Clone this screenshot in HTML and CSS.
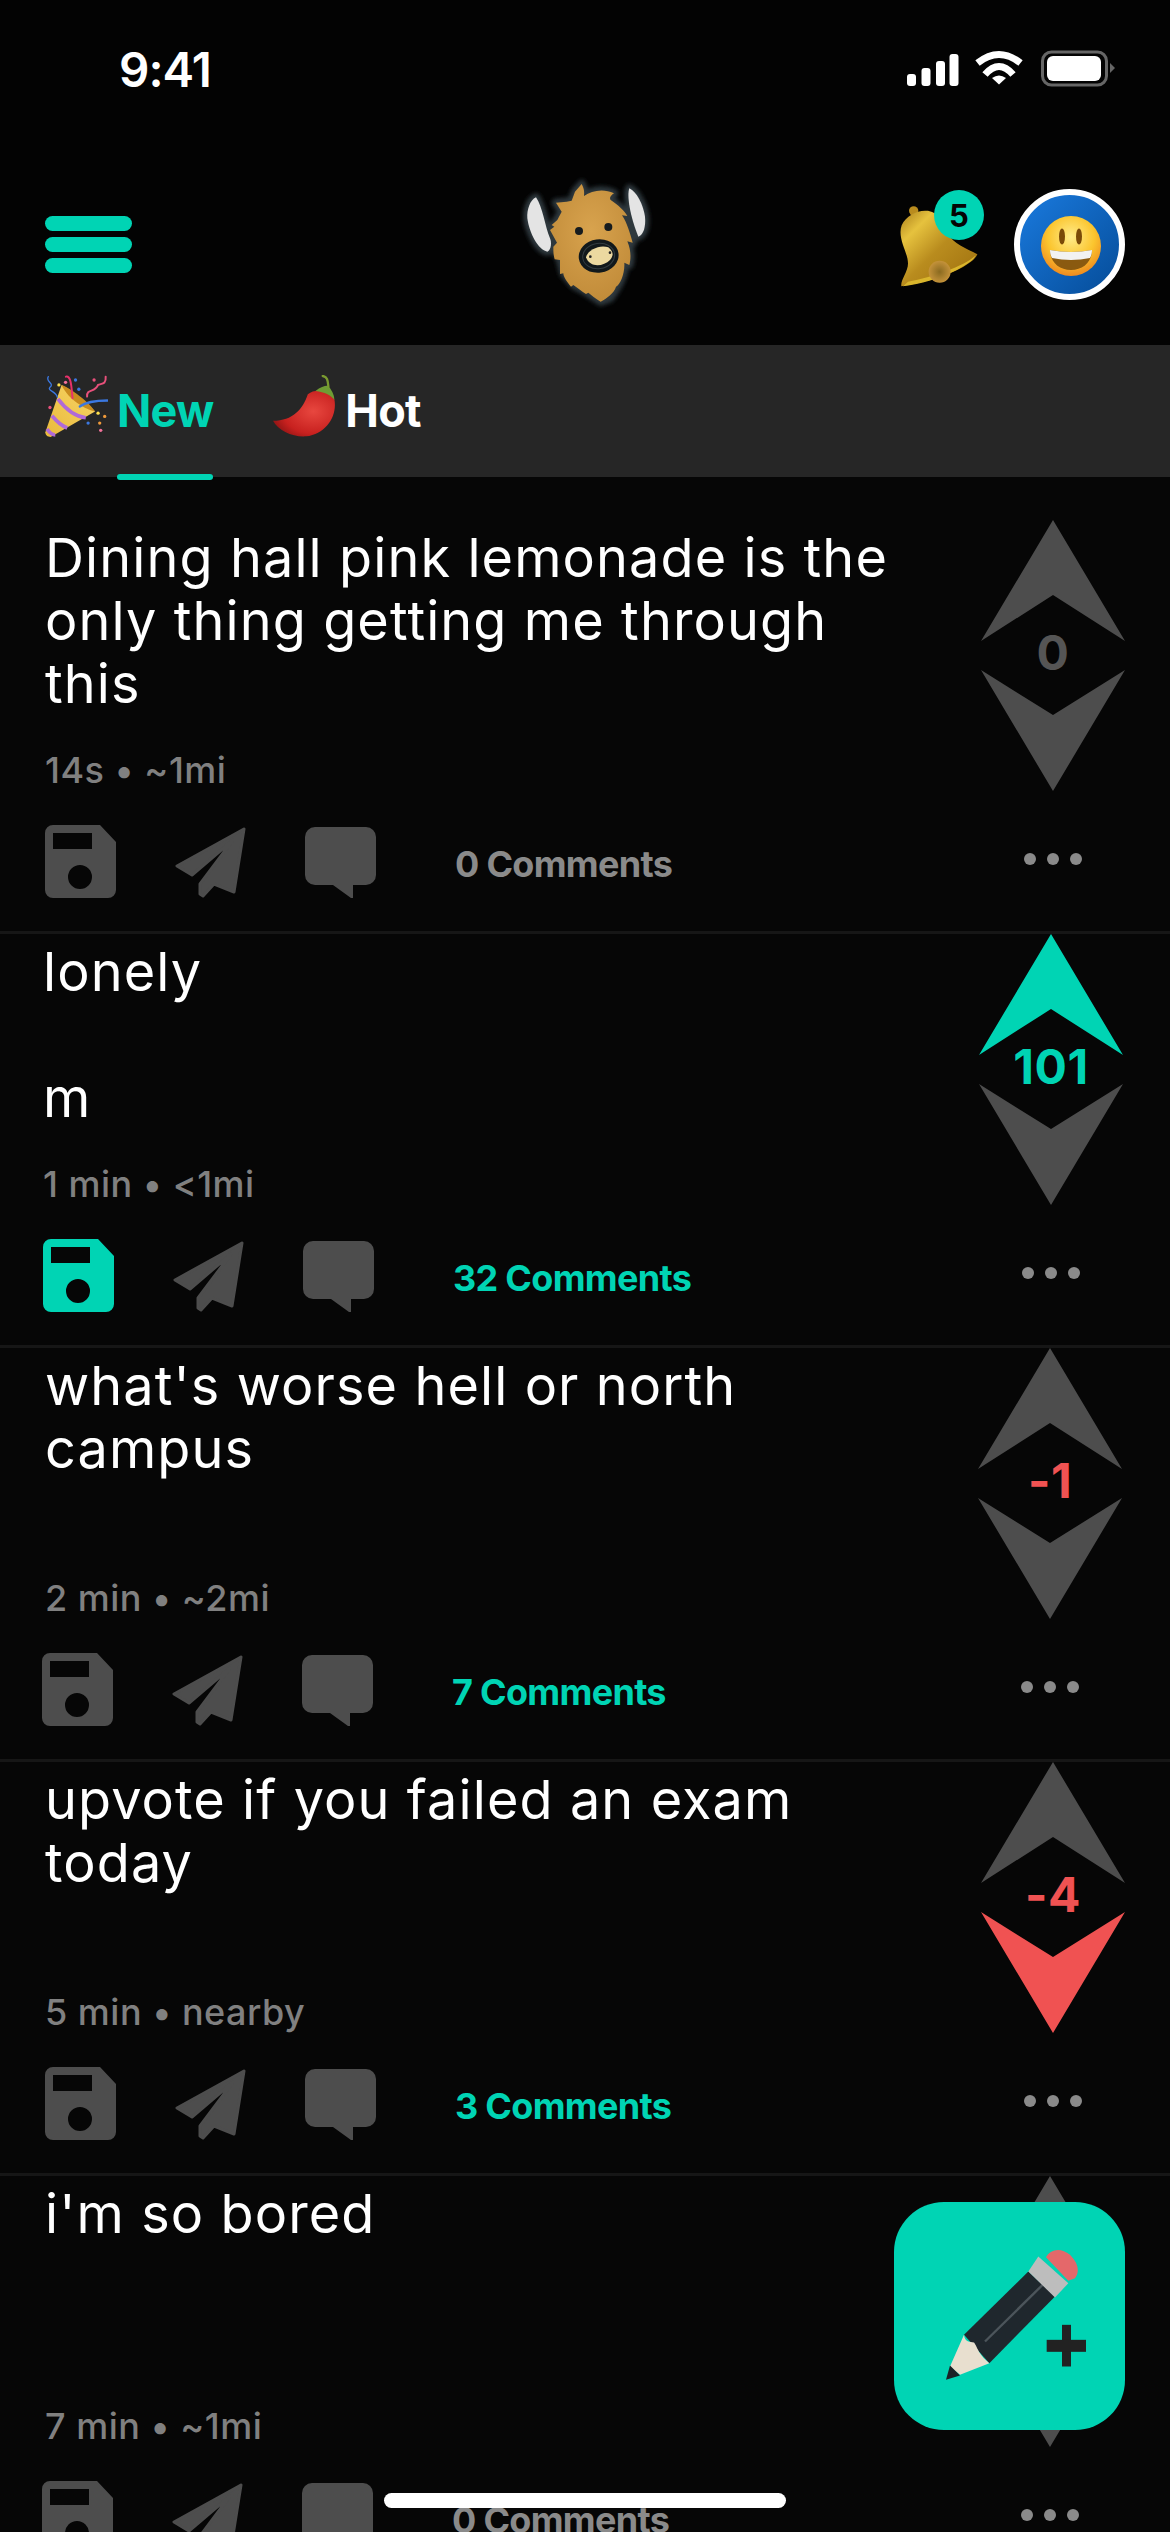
FILE: index.html
```html
<!DOCTYPE html>
<html lang="en">
<head>
<meta charset="utf-8">
<title>Yik Yak</title>
<link rel="stylesheet" href="styles.css">
</head>
<body>
<svg class="sprite" aria-hidden="true">
  <symbol id="i-save" viewBox="0 0 71 73"><path fill="currentColor" fill-rule="evenodd" d="M8 0H55L71 17V65a8 8 0 0 1-8 8H8a8 8 0 0 1-8-8V8a8 8 0 0 1 8-8ZM8 8V24H47V8ZM23 52a12 12 0 1 0 24 0a12 12 0 1 0-24 0Z"/></symbol>
  <symbol id="i-send" viewBox="0 0 71 71"><path fill="currentColor" stroke="currentColor" stroke-width="3" stroke-linejoin="round" d="M69 2L2 39L17 48L58 13L25 57V67L28 69L39 57L59 65Z"/></symbol>
  <symbol id="i-chat" viewBox="0 0 71 71"><path fill="currentColor" d="M10 0H61a10 10 0 0 1 10 10V48a10 10 0 0 1-10 10H48V71L46 71L28 58H10A10 10 0 0 1 0 48V10A10 10 0 0 1 10 0Z"/></symbol>
  <symbol id="i-up" viewBox="0 0 144 121"><path fill="currentColor" d="M72 0L144 121L72 75L0 121Z"/></symbol>
  <symbol id="i-down" viewBox="0 0 144 121"><path fill="currentColor" d="M0 0L72 45L144 0L72 121Z"/></symbol>
</svg>

<div class="phone">
  <header class="top">
    <div class="status">
      <span class="time">9:41</span>
      <svg class="status-icons" width="208" height="37" viewBox="0 0 208 37">
        <g fill="#fff">
          <rect x="0" y="24" width="9" height="12" rx="3"/>
          <rect x="14.500" y="18" width="9" height="18" rx="3"/>
          <rect x="29" y="11" width="9" height="25" rx="3"/>
          <rect x="42.500" y="4" width="9" height="32" rx="3"/>
          <path d="M85 28Q92 23 99 28L92 34.500Z"/>
          <rect x="140" y="6" width="54" height="25" rx="6"/>
          <path fill="#666" d="M203 13L208 18L203 23Z"/>
        </g>
        <g fill="none" stroke="#fff" stroke-width="7">
          <path d="M70.500 13Q92-4 113.500 13"/>
          <path d="M78 24.500Q92 8.500 106 24.500"/>
        </g>
        <rect x="135.500" y="2" width="64" height="33" rx="9" fill="none" stroke="#666" stroke-width="3"/>
      </svg>
    </div>
    <div class="appbar">
      <div class="burger"><span></span><span></span><span></span></div>
      <svg class="logo" width="150" height="150" viewBox="0 0 450 450">
        <defs>
          <filter id="glow" x="-20%" y="-20%" width="140%" height="140%"><feGaussianBlur stdDeviation="7"/></filter>
          <radialGradient id="fur" cx="50%" cy="40%" r="65%"><stop offset="0" stop-color="#d8a34e"/><stop offset="1" stop-color="#c08a38"/></radialGradient>
        </defs>
        <g filter="url(#glow)" fill="#2d393e" stroke="#2d393e" stroke-width="24" stroke-linejoin="round">
          <path d="M78 82C60 90 50 120 52 145C58 190 85 240 112 245C125 240 125 215 120 205C105 170 98 110 78 82Z"/>
          <path d="M358 55C350 75 360 140 385 200C400 195 408 170 405 140C400 105 380 65 358 55Z"/>
          <path d="M215 42C225 60 222 72 222 78C245 62 280 55 312 70C300 78 298 85 302 90C325 105 345 125 352 138L338 138C352 160 360 190 368 218L354 215C365 245 362 270 358 285L345 280C345 310 330 345 300 385L272 395L235 370L190 345L160 310L150 270L130 230L145 215L120 180L140 150L155 125L138 98L170 95L185 92L195 65Z"/>
        </g>
        <path fill="#e4e4e4" d="M78 82C60 90 50 120 52 145C58 190 85 240 112 245C125 240 125 215 120 205C105 170 98 110 78 82Z"/>
        <path fill="#e4e4e4" d="M358 55C350 75 360 140 385 200C400 195 408 170 405 140C400 105 380 65 358 55Z"/>
        <path fill="url(#fur)" d="M215 42C225 60 222 72 222 78C245 62 280 55 312 70C300 78 298 85 302 90C325 105 345 125 352 138L336 136C352 160 360 190 368 218L352 214C365 245 362 270 358 285L343 278C345 310 330 345 318 350C312 370 290 385 272 395C255 385 245 375 235 368L228 372C215 365 205 355 190 345L183 350C170 335 160 320 160 310L150 312C150 295 150 280 150 270L134 268C130 255 130 240 130 230L141 218L120 180L133 170L125 165L142 150L155 125L138 98L170 95L185 92L195 65Z"/>
        <circle cx="207" cy="183" r="12" fill="#161b1e"/>
        <circle cx="295" cy="171" r="12" fill="#161b1e"/>
        <ellipse cx="266" cy="258" rx="60" ry="50" transform="rotate(-8 266 258)" fill="#11181b"/>
        <ellipse cx="266" cy="258" rx="48" ry="38" transform="rotate(-8 266 258)" fill="none" stroke="#333c40" stroke-width="3"/>
        <path fill="#ecd9a0" d="M228 262C232 240 270 222 295 232C310 245 312 255 300 270C280 290 240 295 228 262Z"/>
        <circle cx="241" cy="260" r="4" fill="#222"/>
        <circle cx="300" cy="248" r="4" fill="#222"/>
      </svg>
      <div class="right">
        <div class="bell">
          <svg width="79" height="81" viewBox="28 78 237 242">
            <defs>
              <linearGradient id="gold" x1="0" y1="0" x2="1" y2="1"><stop offset="0" stop-color="#a87c1a"/><stop offset=".22" stop-color="#e6c23e"/><stop offset=".5" stop-color="#b98c1e"/><stop offset=".8" stop-color="#a87a14"/><stop offset="1" stop-color="#7a5808"/></linearGradient>
              <radialGradient id="clap"><stop offset="0" stop-color="#8a6a20"/><stop offset="1" stop-color="#c4923a"/></radialGradient>
            </defs>
            <circle cx="72" cy="92" r="14" fill="#b98c1e"/>
            <path fill="url(#gold)" d="M36 135C50 105 85 88 115 92C150 98 165 130 175 160C190 190 230 205 263 222C255 250 160 300 35 318C32 300 55 275 55 250C55 215 22 175 36 135Z"/>
            <path fill="#d9b52c" d="M55 305C130 290 220 260 258 226C250 250 150 305 40 318Z"/>
            <circle cx="150" cy="275" r="33" fill="url(#clap)"/>
          </svg>
          <span class="badge">5</span>
        </div>
        <div class="avatar">
          <svg width="60" height="60" viewBox="0 0 60 60">
            <defs><radialGradient id="face" cx="50%" cy="35%" r="65%"><stop offset="0" stop-color="#ffec8a"/><stop offset=".6" stop-color="#fbc52e"/><stop offset="1" stop-color="#ee8a1f"/></radialGradient></defs>
            <circle cx="30" cy="30" r="30" fill="url(#face)"/>
            <ellipse cx="21" cy="20.500" rx="3" ry="8" fill="#7a4a08"/>
            <ellipse cx="38" cy="20.500" rx="3" ry="8" fill="#7a4a08"/>
            <path fill="#8a5a10" d="M9 34Q30 38 51 34C51 46 42 54 30 54C18 54 9 46 9 34Z"/>
            <path fill="#f2f2f2" d="M9 34Q30 38 51 34C51 38 50 40 49 42Q30 46 11 42C10 40 9 38 9 34Z"/>
          </svg>
        </div>
      </div>
    </div>
  </header>

  <nav class="tabs">
    <div class="tab tab--on">
      <svg class="tab-emoji" width="63" height="63" viewBox="45 45 190 190">
        <defs><linearGradient id="cone" x1="0" y1="1" x2="1" y2="0"><stop offset="0" stop-color="#e9b93a"/><stop offset="1" stop-color="#f7d668"/></linearGradient></defs>
        <path fill="url(#cone)" d="M46 218L95 75C125 90 170 125 196 155L62 232C52 232 46 226 46 218Z"/>
        <path fill="#c98c1e" d="M95 75C125 85 180 130 196 155C170 150 115 120 95 75Z"/>
        <g fill="none" stroke="#b06ad8" stroke-width="11">
          <path d="M84 117C105 145 135 170 168 174"/>
          <path d="M66 168C80 185 95 198 112 205"/>
          <path d="M51 208C58 218 66 226 76 226"/>
        </g>
        <g fill="none" stroke-linecap="round">
          <path stroke="#3b78e0" stroke-width="7" d="M150 140C170 125 200 122 234 122"/>
          <path stroke="#3b78e0" stroke-width="4" d="M55 50C45 65 75 70 60 82C50 92 80 95 82 112"/>
          <path stroke="#e8316b" stroke-width="6" d="M108 50C125 45 125 90 128 115"/>
          <path stroke="#e8507b" stroke-width="6" d="M172 110C170 85 195 100 205 75C215 70 230 75 228 50"/>
        </g>
        <g>
          <circle cx="87" cy="75" r="5" fill="#ffe14d"/><circle cx="107" cy="67" r="5" fill="#f2729a"/>
          <circle cx="137" cy="60" r="5" fill="#3b78e0"/><circle cx="147" cy="88" r="5" fill="#3b78e0"/>
          <circle cx="193" cy="60" r="5" fill="#e8507b"/><circle cx="60" cy="143" r="5" fill="#e8507b"/>
          <circle cx="205" cy="160" r="5" fill="#ffe14d"/><circle cx="225" cy="170" r="5" fill="#f09a3a"/>
          <circle cx="210" cy="190" r="5" fill="#f09a3a"/><circle cx="175" cy="190" r="5" fill="#3b78e0"/>
          <circle cx="213" cy="212" r="5" fill="#f2729a"/>
        </g>
      </svg>
      <span class="tab-label">New</span>
    </div>
    <div class="tab">
      <svg class="tab-emoji" width="63" height="63" viewBox="730 47 190 190">
        <defs><radialGradient id="chili" cx="65%" cy="45%" r="70%"><stop offset="0" stop-color="#e8473f"/><stop offset=".7" stop-color="#c8211f"/><stop offset="1" stop-color="#8f1414"/></radialGradient></defs>
        <path fill="url(#chili)" d="M730 185C790 185 820 150 835 105C860 85 900 95 915 120C925 170 890 225 830 232C790 235 745 215 730 185Z"/>
        <path fill="#6f9c34" d="M858 95C875 82 890 78 897 80C905 90 915 105 915 122C905 108 885 98 858 95Z"/>
        <path fill="none" stroke="#7a9a30" stroke-width="7" stroke-linecap="round" d="M880 50C895 52 895 65 897 82"/>
      </svg>
      <span class="tab-label">Hot</span>
    </div>
  </nav>

  <main class="feed">
    <article class="post post--first">
      <div class="post-body">
        <p class="post-text">Dining hall pink lemonade is the only thing getting me through this</p>
        <p class="post-meta">14s • ~1mi</p>
      </div>
      <div class="vote">
        <svg class="arrow"><use href="#i-up"/></svg>
        <span class="score">0</span>
        <svg class="arrow"><use href="#i-down"/></svg>
      </div>
      <div class="actions">
        <svg class="ic ic--save"><use href="#i-save"/></svg>
        <svg class="ic"><use href="#i-send"/></svg>
        <svg class="ic"><use href="#i-chat"/></svg>
        <span class="comments">0 Comments</span>
        <span class="dots"><i></i><i></i><i></i></span>
      </div>
    </article>

    <article class="post post--shift2">
      <div class="post-body">
        <p class="post-text">lonely<br><br>m</p>
        <p class="post-meta">1 min • &lt;1mi</p>
      </div>
      <div class="vote vote--up">
        <svg class="arrow arrow--on"><use href="#i-up"/></svg>
        <span class="score">101</span>
        <svg class="arrow"><use href="#i-down"/></svg>
      </div>
      <div class="actions">
        <svg class="ic ic--save ic--on"><use href="#i-save"/></svg>
        <svg class="ic"><use href="#i-send"/></svg>
        <svg class="ic"><use href="#i-chat"/></svg>
        <span class="comments comments--on">32 Comments</span>
        <span class="dots"><i></i><i></i><i></i></span>
      </div>
    </article>

    <article class="post post--shift3">
      <div class="post-body">
        <p class="post-text">what's worse hell or north campus</p>
        <p class="post-meta">2 min • ~2mi</p>
      </div>
      <div class="vote vote--neg">
        <svg class="arrow"><use href="#i-up"/></svg>
        <span class="score">-1</span>
        <svg class="arrow"><use href="#i-down"/></svg>
      </div>
      <div class="actions">
        <svg class="ic ic--save"><use href="#i-save"/></svg>
        <svg class="ic"><use href="#i-send"/></svg>
        <svg class="ic"><use href="#i-chat"/></svg>
        <span class="comments comments--on">7 Comments</span>
        <span class="dots"><i></i><i></i><i></i></span>
      </div>
    </article>

    <article class="post">
      <div class="post-body">
        <p class="post-text">upvote if you failed an exam today</p>
        <p class="post-meta">5 min • nearby</p>
      </div>
      <div class="vote vote--neg">
        <svg class="arrow"><use href="#i-up"/></svg>
        <span class="score">-4</span>
        <svg class="arrow arrow--down"><use href="#i-down"/></svg>
      </div>
      <div class="actions">
        <svg class="ic ic--save"><use href="#i-save"/></svg>
        <svg class="ic"><use href="#i-send"/></svg>
        <svg class="ic"><use href="#i-chat"/></svg>
        <span class="comments comments--on">3 Comments</span>
        <span class="dots"><i></i><i></i><i></i></span>
      </div>
    </article>

    <article class="post post--shift3">
      <div class="post-body">
        <p class="post-text">i'm so bored</p>
        <p class="post-meta">7 min • ~1mi</p>
      </div>
      <div class="vote">
        <svg class="arrow"><use href="#i-up"/></svg>
        <span class="score"></span>
        <svg class="arrow"><use href="#i-down"/></svg>
      </div>
      <div class="actions">
        <svg class="ic ic--save"><use href="#i-save"/></svg>
        <svg class="ic"><use href="#i-send"/></svg>
        <svg class="ic"><use href="#i-chat"/></svg>
        <span class="comments">0 Comments</span>
        <span class="dots"><i></i><i></i><i></i></span>
      </div>
    </article>
  </main>

  <button class="fab" type="button" aria-label="New post">
    <svg width="140" height="131" viewBox="168 148 420 392">
      <path fill="#1f272d" d="M222 405L415 215L495 290L298 490Z"/>
      <path fill="none" stroke="#4c555b" stroke-width="7" d="M285 425L468 245"/>
      <path fill="#e8dfcf" d="M222 405C225 430 240 425 252 428C262 440 262 460 298 490L210 525L180 500Z"/>
      <path fill="#1b2226" d="M180 497L210 527L168 540Z"/>
      <path fill="#bdbdbd" d="M415 215L445 170L535 250L495 293Z"/>
      <path fill="#e4686a" d="M468 172C480 150 510 140 540 165C565 190 570 215 555 235L535 243Z"/>
      <rect x="516" y="375" width="27" height="125" fill="#222"/>
      <rect x="470" y="420" width="118" height="36" fill="#222"/>
    </svg>
  </button>
  <div class="home-bar"></div>
</div>
</body>
</html>
```
FILE: styles.css
```css
* { box-sizing: border-box; }
html, body { margin: 0; padding: 0; background: #060606; }
p { margin: 0; }

.sprite { display: none; }

.phone {
  position: relative;
  width: 1170px;
  height: 2532px;
  overflow: hidden;
  background: #060606;
  color: #fff;
  font-family: Inter, "Liberation Sans", sans-serif;
}

/* header */
.top { background: #030303; height: 345px; }
.status {
  height: 138px;
  display: flex;
  align-items: center;
  justify-content: space-between;
  padding: 0 55px 0 119px;
}
.time { font-size: 47.500px; font-weight: 600; letter-spacing: -1px; }
.status-icons { margin-top: -1px; }

.appbar {
  height: 207px;
  padding: 51px 45px 0;
  display: grid;
  grid-template-columns: 1fr auto 1fr;
  align-items: start;
}
.burger { display: flex; flex-direction: column; gap: 6px; margin-top: 27px; }
.burger span { width: 87px; height: 15px; border-radius: 8px; background: #00d4b4; }
.logo { margin-top: -19px; }
.right { display: flex; justify-content: flex-end; }
.bell { position: relative; width: 79px; height: 81px; margin: 17px 36px 0 0; }
.bell svg { display: block; }
.badge {
  position: absolute;
  left: 35px;
  top: -16px;
  width: 50px;
  height: 50px;
  border-radius: 50%;
  background: #00d4b4;
  color: #050505;
  font-size: 31px;
  font-weight: 700;
  display: flex;
  align-items: center;
  justify-content: center;
}
.avatar {
  width: 111px;
  height: 111px;
  border-radius: 50%;
  border: 6px solid #fff;
  background: linear-gradient(135deg, #1a7ade, #054c98);
  display: flex;
  align-items: center;
  justify-content: center;
  padding: 2px 0 0 2px;
}

/* tabs */
.tabs {
  height: 132px;
  background: #262626;
  display: flex;
  align-items: center;
  gap: 60px;
  padding-left: 45px;
}
.tab { position: relative; height: 100%; display: flex; align-items: center; gap: 9px; }
.tab-emoji { margin-top: -9px; }
.tab-label { font-size: 45px; font-weight: 700; letter-spacing: -0.800px; line-height: 54px; margin-top: -1px; color: #fff; }
.tab--on .tab-label { color: #00d4b4; }
.tab--on::after {
  content: "";
  position: absolute;
  left: 72px;
  right: 0;
  bottom: -3px;
  height: 6px;
  border-radius: 3px;
  background: #00d4b4;
}

/* feed */
.feed { padding-top: 40px; }
.post {
  --shift: 0px;
  height: 414px;
  border-top: 3px solid #161616;
  padding: 0 calc(45px + var(--shift)) 0 calc(45px - var(--shift));
  display: grid;
  grid-template-columns: minmax(0, 1fr) 144px;
  grid-template-rows: 272px auto;
  align-content: start;
}
.post--first { border-top-color: transparent; }
.post--shift2 { --shift: 2px; }
.post--shift3 { --shift: 3px; }
.post--shift3 .post-body { margin-left: 3px; }

.post-body { padding-top: 6px; }
.post-text {
  min-height: 189px;
  max-width: 860px;
  font-size: 54px;
  line-height: 63px;
  letter-spacing: 1.100px;
  color: #fff;
}
.post-meta {
  margin-top: 33px;
  font-size: 36px;
  line-height: 44px;
  font-weight: 500;
  letter-spacing: 0.500px;
  color: #808080;
}

.vote { display: flex; flex-direction: column; align-items: center; color: #4d4d4d; }
.arrow { display: block; width: 144px; height: 121px; flex: none; color: #4d4d4d; }
.arrow--on { color: #00d4b4; }
.arrow--down { color: #f05252; }
.score {
  height: 29px;
  line-height: 23px;
  font-size: 48px;
  font-weight: 700;
  letter-spacing: 0.500px;
  color: #555;
}
.vote--up .score { color: #00d4b4; }
.vote--neg .score { color: #f05252; }

.actions {
  grid-column: 1 / -1;
  margin-top: 33px;
  display: flex;
  align-items: flex-end;
  gap: 59px;
  color: #4d4d4d;
}
.ic { display: block; width: 71px; height: 71px; flex: none; color: #4d4d4d; }
.ic--save { height: 73px; }
.ic--on { color: #00d4b4; }
.comments {
  align-self: center;
  margin: 5px 0 0 20px;
  font-size: 36px;
  font-weight: 700;
  letter-spacing: -0.700px;
  color: #8a8a8a;
}
.comments--on { color: #00d4b4; }
.dots {
  margin: 0 43px 6px auto;
  align-self: center;
  display: flex;
  gap: 11px;
}
.dots i { display: block; width: 12px; height: 12px; border-radius: 50%; background: #8a8a8a; }

/* overlays */
.fab {
  position: absolute;
  left: 894px;
  top: 2202px;
  width: 231px;
  height: 228px;
  border: 0;
  padding: 0 0 3px 13px;
  border-radius: 50px;
  background: #00d4b4;
  display: flex;
  align-items: center;
  justify-content: center;
}
.home-bar {
  position: absolute;
  left: 384px;
  top: 2493px;
  width: 402px;
  height: 15px;
  border-radius: 8px;
  background: #fff;
}
```
